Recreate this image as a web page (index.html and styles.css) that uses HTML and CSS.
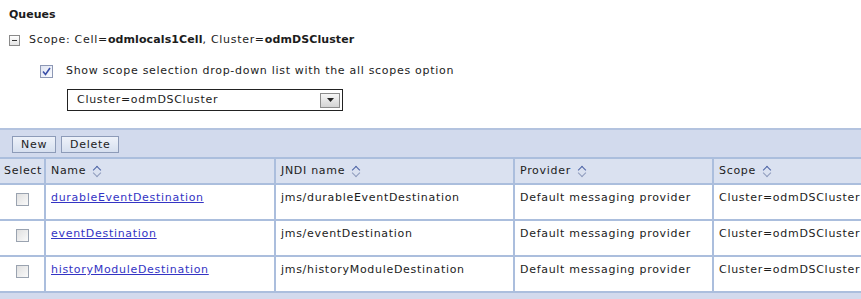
FILE: index.html
```html
<!DOCTYPE html>
<html lang="en">
  <head>
    <meta charset="UTF-8" />
    <title>Queues</title>
    <link rel="stylesheet" href="styles.css">
  </head>
  <body>
    <h3 class="title">Queues</h3>

    <div class="scope">
      <span class="collapse"></span>
      <span>Scope: Cell=<b>odmlocals1Cell</b>, Cluster=<b>odmDSCluster</b></span>
    </div>

    <div class="scope-body">
      <label class="show-all">
        <span class="check checked">
          <svg width="9" height="9" viewBox="0 0 9 9"><path d="M1 4.5 L3.5 7.5 L8 1" fill="none" stroke="#3a4fa8" stroke-width="1.6"/></svg>
        </span>
        Show scope selection drop-down list with the all scopes option
      </label>
      <div class="select">
        <span>Cluster=odmDSCluster</span>
        <span class="arrow">
          <svg width="7" height="4" viewBox="0 0 7 4"><path d="M0 0 H7 L3.5 4 Z" fill="#222"/></svg>
        </span>
      </div>
    </div>

    <div class="grid">
      <div class="toolbar">
        <button>New</button>
        <button>Delete</button>
      </div>

      <div class="rows">
        <div class="th sel">Select</div>
        <div class="th">Name <i class="sort"></i></div>
        <div class="th">JNDI name <i class="sort"></i></div>
        <div class="th">Provider <i class="sort"></i></div>
        <div class="th">Scope <i class="sort"></i></div>

        <div class="td sel"><span class="check"></span></div>
        <div class="td"><a href="#">durableEventDestination</a></div>
        <div class="td">jms/durableEventDestination</div>
        <div class="td">Default messaging provider</div>
        <div class="td">Cluster=odmDSCluster</div>

        <div class="td sel"><span class="check"></span></div>
        <div class="td"><a href="#">eventDestination</a></div>
        <div class="td">jms/eventDestination</div>
        <div class="td">Default messaging provider</div>
        <div class="td">Cluster=odmDSCluster</div>

        <div class="td sel"><span class="check"></span></div>
        <div class="td"><a href="#">historyModuleDestination</a></div>
        <div class="td">jms/historyModuleDestination</div>
        <div class="td">Default messaging provider</div>
        <div class="td">Cluster=odmDSCluster</div>
      </div>
      <div class="footer"></div>
    </div>
  </body>
</html>
```

FILE: styles.css
```css
body {
  margin: 0;
  font-family: "DejaVu Sans", Verdana, sans-serif;
  font-size: 11px;
  line-height: 14px;
  letter-spacing: 0.7px;
  color: #1c1c1c;
  background: #fff;
  overflow: hidden;
}
b {
  letter-spacing: 0.1px;
}
.title {
  margin: 0;
  padding: 8px 0 0 9px;
  font-size: 11px;
  letter-spacing: 0;
}
.scope {
  display: flex;
  align-items: center;
  gap: 9px;
  margin-top: 11px;
  padding-left: 9px;
}
.collapse {
  flex: none;
  width: 9px;
  height: 9px;
  border: 1px solid #8a8a8a;
  background: linear-gradient(#fff, #e4e4e4);
  position: relative;
}
.collapse::after {
  content: "";
  position: absolute;
  left: 2px;
  top: 4px;
  width: 5px;
  height: 1px;
  background: #333;
}
.scope-body {
  padding-left: 40px;
}
.show-all {
  display: flex;
  align-items: center;
  gap: 13px;
  margin-top: 17px;
}
.check {
  flex: none;
  display: inline-flex;
  align-items: center;
  justify-content: center;
  width: 11px;
  height: 11px;
  border: 1px solid #9aa3b0;
  background: linear-gradient(135deg, #e0e0e0, #fafafa);
}
.check.checked {
  border-color: #8d98b5;
  background: linear-gradient(135deg, #dfe4f2, #fbfcff);
}
.select {
  box-sizing: border-box;
  display: flex;
  align-items: center;
  justify-content: space-between;
  width: 276px;
  height: 22px;
  margin: 11px 0 0 27px;
  padding: 0 2px 0 9px;
  border: 1px solid #222;
}
.arrow {
  display: flex;
  align-items: center;
  justify-content: center;
  width: 18px;
  height: 13px;
  border: 1px solid #8c8c8c;
  background: linear-gradient(#f6f6f6, #d4d4d4);
}
.grid {
  margin-top: 17px;
  border-top: 2px solid #b3c3df;
}
.toolbar {
  display: flex;
  gap: 5px;
  padding: 6px 12px 4px;
  background: #d2daed;
}
button {
  font-family: inherit;
  font-size: 11px;
  letter-spacing: 0.7px;
  color: #222;
  height: 17px;
  padding: 0 8px;
  border: 1px solid #8d9bb8;
  background: linear-gradient(#eef2fa, #d6dfef);
}
.rows {
  display: grid;
  grid-template-columns: 46px 230px 239px 199px 1fr;
}
.th, .td {
  box-sizing: border-box;
  padding: 0 5px;
  border-right: 2px solid #abbedd;
  border-bottom: 2px solid #abbedd;
  white-space: nowrap;
  overflow: hidden;
}
.th:nth-child(5n), .td:nth-child(5n) {
  border-right: 0;
}
.th {
  display: flex;
  align-items: center;
  height: 28px;
  border-top: 2px solid #abbedd;
  background: #dae1f0;
}
.td {
  height: 36px;
  padding-top: 6px;
}
.th.sel {
  padding-left: 4px;
}
.td.sel {
  display: flex;
  justify-content: center;
  padding-top: 8px;
}
a {
  color: #3434c4;
}
.sort {
  flex: none;
  width: 10px;
  height: 13px;
  margin-left: 6px;
  position: relative;
}
.sort::before, .sort::after {
  content: "";
  position: absolute;
  left: 2px;
  width: 5px;
  height: 5px;
  border: solid #4d64a6;
  border-width: 1.3px 0 0 1.3px;
}
.sort::before {
  top: 2px;
  transform: rotate(45deg);
}
.sort::after {
  top: 5px;
  transform: rotate(225deg);
  border-color: #8e9bbd;
}
.footer {
  height: 8px;
  background: #d2daed;
}
```
